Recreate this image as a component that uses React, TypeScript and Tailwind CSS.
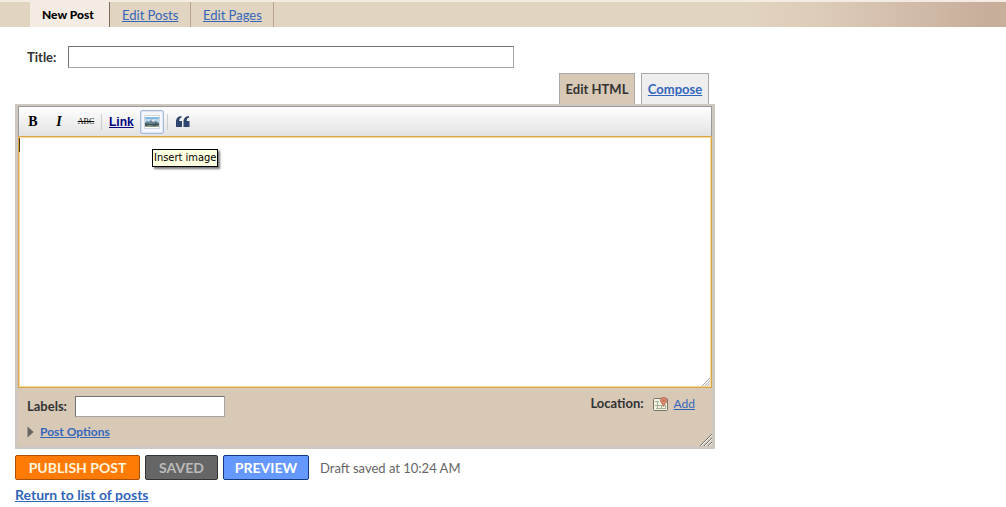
import { ReactNode } from "react"

const link = "text-[#3366bb] underline"

function ToolButton({ label, className, children }: { label: string; className: string; children: ReactNode }) {
  return (
    <button type="button" aria-label={label} className={`flex h-6 items-center justify-center ${className}`}>
      {children}
    </button>
  )
}

function ImageIcon() {
  return (
    <svg width="16" height="14" viewBox="0 0 16 14" aria-hidden="true">
      <rect x="0.5" y="0.5" width="15" height="13" fill="#fff" stroke="#d4d8de" />
      <rect x="1" y="2" width="14" height="10" fill="#b5daee" />
      <path d="M1 2h14v2H1z" fill="#83bcdf" />
      <path d="M1 8l2-2 2 1 3-3 2 1 2 1 3 2v3H1z" fill="#66808f" />
      <path d="M7 5l2-1 3 2-3 1z" fill="#dce8ee" />
      <path d="M1 8l3 1h5l3-1 3 1v3H1z" fill="#3b5658" />
      <path d="M1 11l5-1 4 1 5-1v2H1z" fill="#8b9a82" />
    </svg>
  )
}

function QuoteIcon() {
  return (
    <svg width="14" height="11" viewBox="0 0 14 11" fill="#2e456e" aria-hidden="true">
      <path d="M5.5 0v1.5C4 2 3.2 3 3.2 5H6v6H0V5.5C0 2.5 2 0.3 5.5 0z" />
      <path d="M13 0v1.5C11.5 2 10.7 3 10.7 5h2.8v6h-6V5.5C7.5 2.5 9.5 0.3 13 0z" />
    </svg>
  )
}

function MapIcon() {
  return (
    <svg width="16" height="14" viewBox="0 0 16 14" aria-hidden="true">
      <rect x="0.5" y="1.5" width="14" height="12" rx="1" fill="#f3f1df" stroke="#77736a" />
      <path d="M2 4.5h4M2 8.5h11M3 11.5h10M4.5 4v8M8.5 9v3M12.5 9v3" stroke="#a5b29b" fill="none" />
      <path d="M10.5 9.5C10 7 7.500 6 7.500 3.500a3.200 3.200 0 0 1 6.400 0C13.900 6 11 7 10.500 9.500z" fill="#d98a6c" stroke="#ad6650" strokeWidth="0.7" />
      <circle cx="10.7" cy="3.5" r="1" fill="#b96a52" />
    </svg>
  )
}

function Grip({ size }: { size: number }) {
  return (
    <svg width={size} height={size} viewBox="0 0 12 12" aria-hidden="true">
      <path d="M1 12L12 1M5 12l7-7M9 12l3-3" stroke="#fff" fill="none" />
      <path d="M0 12L12 0M4 12l8-8M8 12l4-4" stroke="#707070" fill="none" />
    </svg>
  )
}

export default function App() {
  return (
    <div className="bg-white font-['Lato','Liberation_Sans',sans-serif] text-[13px] leading-4 text-[#333]">
      <nav className="flex h-[27px] border-t-2 border-[#f4ece2] bg-[linear-gradient(90deg,#e1d4c0_74%,#dccbb7_82%,#c8ae9c_98%,#c6af9b)] pl-[30px]">
        <a href="#new" className="flex w-20 items-center border-r border-[#7d6b5e] bg-[#f4ece2] pl-3 text-xs font-black text-black">
          New Post
        </a>
        <a href="#posts" className={`flex w-[81px] items-center border-r border-[#b9a08c] pl-3 ${link}`}>
          Edit Posts
        </a>
        <a href="#pages" className={`flex w-[83px] items-center border-r border-[#b9a08c] pl-3 ${link}`}>
          Edit Pages
        </a>
      </nav>

      <main className="max-w-[715px] pl-[15px]">
        <div className="flex items-center gap-2 pt-[19px] pl-3">
          <label htmlFor="title" className="w-[33px] font-bold">
            Title:
          </label>
          <input id="title" className="h-[22px] w-full max-w-[446px] border border-[#a5a5a5] border-t-[#737373] border-l-[#737373] px-1 outline-none" />
        </div>

        <div className="flex justify-end gap-1.5 pt-[5px] pr-1.5 font-bold">
          <button type="button" className="h-[31px] w-[76px] border border-b-0 border-[#a9a9a9] bg-[#d8c9b7] font-bold">
            Edit HTML
          </button>
          <a href="#compose" className={`flex h-[31px] w-[68px] items-center justify-center border border-b-0 border-[#a9a9a9] bg-[#eee] ${link}`}>
            Compose
          </a>
        </div>

        <section className="border-[3px] border-t-2 border-[#cfc8c0] bg-[#d8c9b7]">
          <div className="relative flex h-[30px] items-center border-x border-t border-[#999] bg-linear-to-b from-white to-[#e2e2e2] text-black">
            <ToolButton label="Bold" className="w-7 font-['Liberation_Serif',serif] text-sm font-black">
              B
            </ToolButton>
            <ToolButton label="Italic" className="w-6 font-['Liberation_Serif',serif] text-sm font-bold italic">
              I
            </ToolButton>
            <ToolButton label="Strikethrough" className="w-[30px] font-['Liberation_Serif',serif] text-[8px] line-through">
              ABC
            </ToolButton>
            <span className="h-4 w-px bg-[#ccc]" />
            <a href="#link" className="mr-1.5 ml-[7px] font-['Liberation_Sans',sans-serif] text-xs font-bold text-[#000080] underline">
              Link
            </a>
            <ToolButton label="Insert image" className="w-6 rounded-xs border border-[#a8bbd8] bg-[#f4f7fc] ring-1 ring-[#dbe4f1] ring-inset">
              <ImageIcon />
            </ToolButton>
            <span className="ml-[3px] h-4 w-px bg-[#ccc]" />
            <ToolButton label="Blockquote" className="w-[30px]">
              <QuoteIcon />
            </ToolButton>
            <div role="tooltip" className="absolute top-[42px] left-[133px] z-10 border border-black bg-[#ffffe1] px-px font-['DejaVu_Sans_Condensed','DejaVu_Sans',sans-serif] text-[11px] leading-4 whitespace-nowrap shadow-[2px_2px_2px_#777]">
              Insert image
            </div>
          </div>

          <div className="relative flex">
            <textarea aria-label="Post body" className="h-[252px] w-full resize-none border border-[#dca54a] bg-white ring-1 ring-[#f3d79b] outline-none ring-inset" />
            {/* text cursor */}
            <span className="absolute top-0.5 left-px h-3.5 w-px bg-[#4a3a1a]" />
            <span className="absolute right-0.5 bottom-0.5">
              <Grip size={8} />
            </span>
          </div>

          <div className="relative flex h-[58px] justify-between pt-2 pr-[17px] pl-[9px] text-xs">
            <div>
              <div className="flex items-center">
                <label htmlFor="labels" className="w-12 text-[13px] font-bold">
                  Labels:
                </label>
                <input id="labels" className="h-[21px] w-[150px] border border-[#a5a5a5] border-t-[#737373] border-l-[#737373] bg-white px-1 outline-none" />
              </div>
              <div className="mt-[7px] flex items-center gap-1.5">
                <svg width="7" height="12" viewBox="0 0 7 12" aria-hidden="true">
                  <path d="M0.5 0.5L6.5 6L0.5 11.5z" fill="#666" />
                </svg>
                <a href="#options" className={`font-bold ${link}`}>
                  Post Options
                </a>
              </div>
            </div>
            <div className="flex h-4 items-center">
              <b className="mr-[9px] text-[13px]">Location:</b>
              <MapIcon />
              <a href="#location" className={`ml-[5px] ${link}`}>
                Add
              </a>
            </div>
            <span className="absolute right-0 bottom-0">
              <Grip size={12} />
            </span>
          </div>
        </section>

        <div className="flex items-center gap-[5px] pt-1.5 text-sm font-bold text-white">
          <button type="button" className="h-[25px] w-[125px] rounded-xs border border-[#a84f08] bg-[#ff7b05] text-[#fff4dc]">
            PUBLISH POST
          </button>
          <button type="button" className="h-[25px] w-[73px] rounded-xs border border-[#333] bg-[#666] text-[#bbb]">
            SAVED
          </button>
          <button type="button" className="h-[25px] w-[86px] rounded-xs border border-[#123a7c] bg-[#6699ff]">
            PREVIEW
          </button>
          <span className="ml-1.5 pt-0.5 text-[13px] font-normal text-[#666]">Draft saved at 10:24 AM</span>
        </div>
        <a href="#list" className={`mt-[7px] inline-block text-sm leading-4 font-bold ${link}`}>
          Return to list of posts
        </a>
      </main>
    </div>
  )
}
